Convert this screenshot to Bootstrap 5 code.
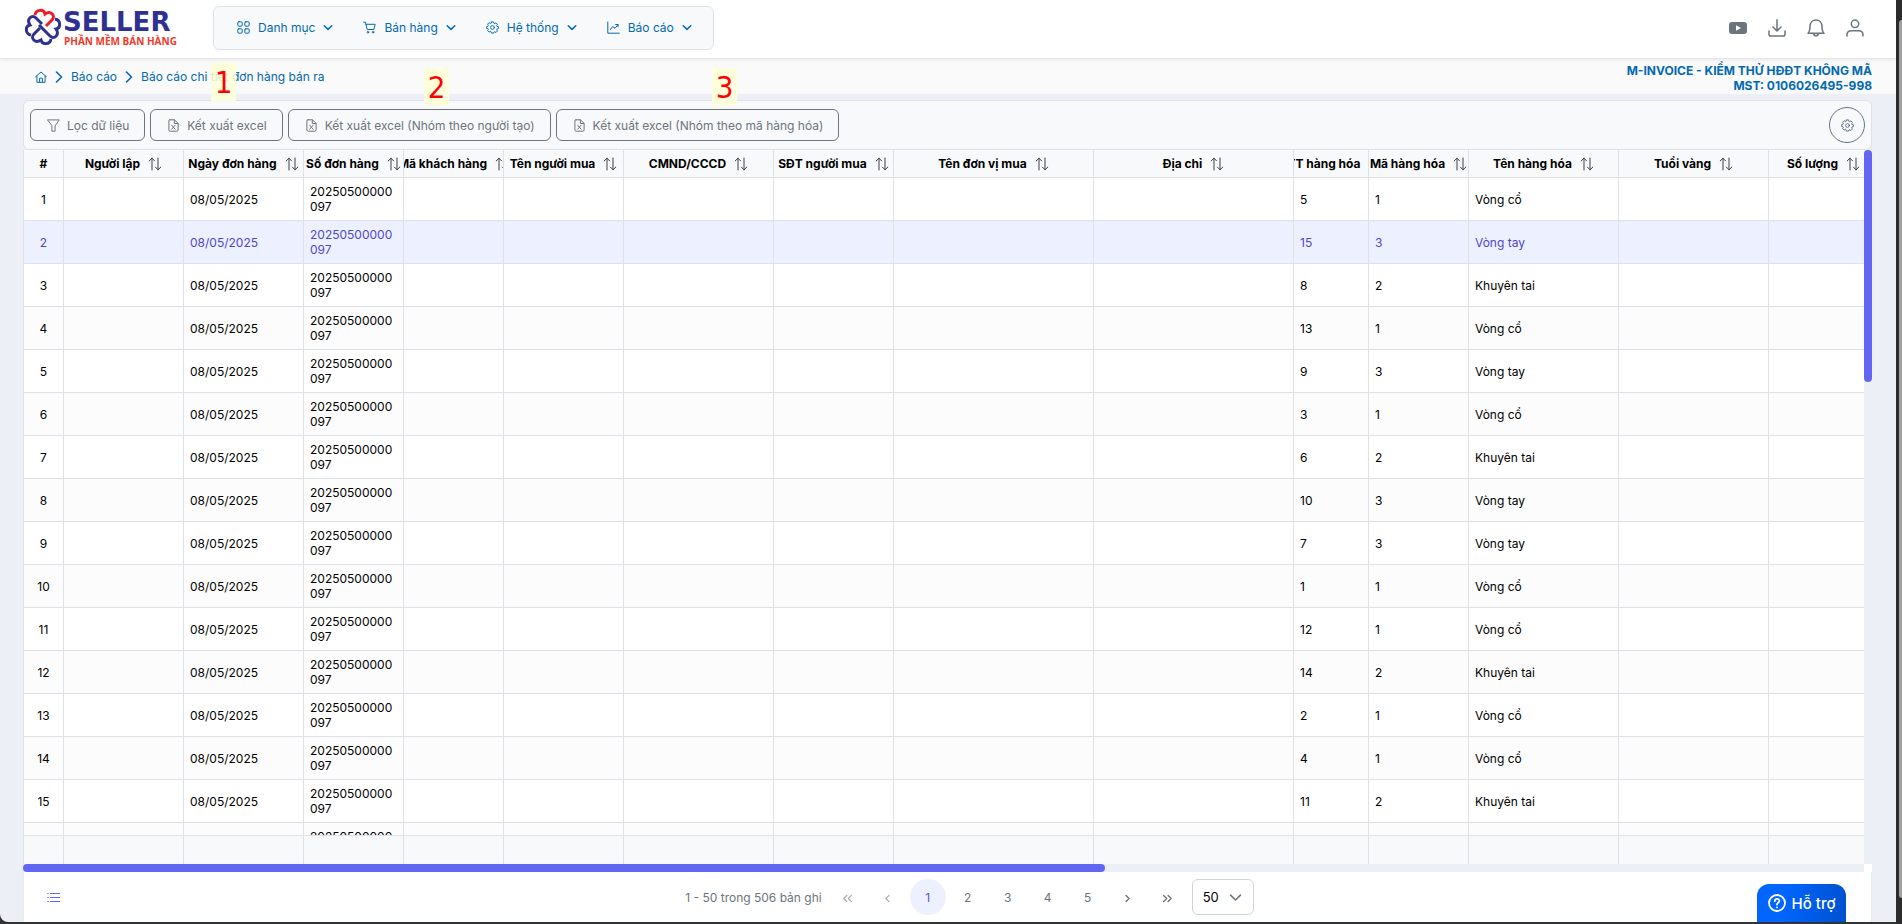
<!DOCTYPE html>
<html lang="vi">
<head>
<meta charset="utf-8">
<meta name="viewport" content="width=device-width, initial-scale=1">
<title>Báo cáo chi tiết đơn hàng bán ra</title>
<link href="https://cdn.jsdelivr.net/npm/bootstrap@5.3.0/dist/css/bootstrap.min.css" rel="stylesheet">
<style>
  :root { --brand: #0369b0; --line: #dee2e6; --soft: #f8f9fb; --shade: #eceff5; --accent: #6366f1; --ink: #6c757d; }
  body { font-family: Inter, "Liberation Sans", sans-serif; font-size: 12px; line-height: 15px; background: #323335; color: #000; }
  a { text-decoration: none; }
  .ico { width: 13px; height: 13px; flex: none; fill: none; stroke: currentColor; stroke-linecap: round; stroke-linejoin: round; }
  .app-page { background: var(--shade); border-bottom-left-radius: 8px; margin-bottom: 2px; min-width: 0; }
  .frame-bar { width: 6px; padding: 20px 0 26px 3px; background: #2c2c2c; }
  .frame-bar div { background: #9f9f9f; border-radius: 3px 0 0 3px; }
  .top-bar { height: 59px; background: #fff; border-bottom: 1px solid #e6e6e6; box-shadow: 0 1px 4px rgba(0,0,0,.08); padding-right: 32px; z-index: 1; }
  .brand-logo { margin-left: 23px; width: 190px; flex: none; }
  .main-menu { height: 44px; background: var(--soft); border: 1px solid var(--line); border-radius: 6px; padding: 0 6px 0 8px; margin-bottom: 3px; }
  .main-menu a { color: var(--brand); padding: 0 15px; }
  .main-menu .caret { width: 10px; }
  .quick { color: var(--ink); gap: 21px; margin-bottom: 2px; }
  .quick .ico { width: 18px; height: 18px; }
  .crumbs { height: 35px; background: #fafafa; padding: 0 24px 0 35px; }
  .crumbs, .crumbs a { color: var(--brand); }
  .crumbs .breadcrumb { gap: 8px; }
  .crumbs .ico { width: 12px; height: 12px; }
  .crumbs .sep { width: 8px; }
  .org { font-weight: 700; text-align: right; padding-top: 2px; }
  .work { padding: 6px 24px 0 23px; min-height: 0; }
  .tool-bar { height: 50px; background: var(--soft); border: 1px solid var(--line); border-radius: 6px; padding: 0 6px; gap: 5px; }
  .tool { height: 32px; padding: 0 15px 0 16px; border: 1px solid var(--ink); border-radius: 6px; background: transparent; color: var(--ink); gap: 7px; }
  .round-tool { width: 36px; height: 36px; border: 1px solid #64748b; border-radius: 50%; background: transparent; color: #5b6b80; }
  .grid-area { min-height: 0; }
  .grid-body { min-width: 0; border-left: 1px solid var(--line); background: #fff; }
  .clip { overflow: hidden; min-height: 0; }
  .orders { table-layout: fixed; width: 1855px; border-collapse: separate; border-spacing: 0; }
  .orders th, .orders td { border-right: 1px solid var(--line); border-bottom: 1px solid var(--line); overflow: hidden; }
  .orders th { height: 28px; background: var(--soft); padding: 0; font-weight: 700; }
  .orders th div { display: flex; justify-content: center; align-items: center; gap: 8px; white-space: nowrap; }
  .orders th .ico { width: 14px; height: 14px; color: #3b4148; }
  .orders td { height: 43px; padding: 6px; overflow-wrap: anywhere; }
  .orders tbody tr:nth-child(even) { background: #fcfcfc; }
  .orders tbody tr.picked { background: #edf1ff; color: #4f46d0; }
  .orders td:first-child { text-align: center; }
  .totals { border-top: 1px solid var(--line); flex: none; }
  .totals tfoot td { border-bottom: 0; height: 28px; padding: 0; background: var(--soft); }
  .v-track { width: 8px; }
  .v-track div { height: 32.5%; background: var(--accent); border-radius: 4px; }
  .h-track { height: 8px; background: linear-gradient(var(--shade), var(--shade)) 0 0 / calc(100% - 8px) 100% no-repeat #fff; }
  .h-track div { width: 58.5%; height: 100%; background: var(--accent); border-radius: 4px; }
  .pager-bar { height: 50px; background: #fff; border: solid #e9ecef; border-width: 0 1px; }
  .list-tool { width: 44px; padding: 0 0 0 23px; border: 0; background: transparent; color: var(--accent); }
  .pager { gap: 4px; margin: 0 6px 0 8px; }
  .pager button { width: 36px; height: 36px; border: 0; border-radius: 50%; background: transparent; color: var(--ink); padding: 0; }
  .pager button.now { background: #edf1ff; color: #5b50d0; }
  .pager button:disabled { opacity: .6; }
  .per-page { appearance: none; width: 62px; height: 36px; border: 1px solid #ced4da; border-radius: 6px; padding: 0 10px; background: #fff; color: #000; font-size: 13px; }
  .per-caret { right: 12px; top: 12px; color: var(--ink); pointer-events: none; }
  .help-tab { right: 50px; bottom: 0; width: 89px; height: 38px; border: 0; border-radius: 12px 12px 0 0; background: linear-gradient(100deg, #0066ff 30%, #0050cc); color: #fff; font-size: 15px; font-weight: 500; gap: 6px; z-index: 2; }
  .help-tab .ico { width: 18px; height: 18px; }
  .step { width: 25px; height: 38px; background: rgba(255,255,214,.85); color: #f00; font: 31px/38px "DejaVu Sans Condensed", "DejaVu Sans", sans-serif; text-align: center; z-index: 2; }
  .step-1 { left: 211px; top: 63px; }
  .step-2 { left: 424px; top: 68px; }
  .step-3 { left: 712px; top: 68px; }
</style>
</head>
<body>
<svg class="d-none">
  <symbol id="i-grid" viewBox="0 0 13 13"><rect x=".8" y=".8" width="4.4" height="4.4" rx="1"/><rect x="7.8" y=".8" width="4.4" height="4.4" rx="1"/><rect x=".8" y="7.8" width="4.4" height="4.4" rx="1"/><rect x="7.8" y="7.8" width="4.4" height="4.4" rx="1"/></symbol>
  <symbol id="i-cart" viewBox="0 0 13 13"><path d="M.6 1.2h1.8l1.8 7.3h6.6l1.4-5.2H3"/><circle cx="4.9" cy="11.2" r=".8"/><circle cx="10" cy="11.2" r=".8"/></symbol>
  <symbol id="i-gear" viewBox="0 0 14 14"><path d="M5.8 1h2.4l.3 1.5.9.4 1.3-.9 1.6 1.6-.9 1.3.4.9 1.5.3v2.2l-1.5.3-.4.9.9 1.3-1.6 1.6-1.3-.9-.9.4L8.200 13H5.800l-.3-1.500-.9-.4-1.300.9-1.600-1.600.9-1.300-.4-.9L.8 8.200V5.900l1.400-.3.4-.9-.9-1.300 1.600-1.600 1.300.9.900-.4z"/><circle cx="7" cy="7" r="2"/></symbol>
  <symbol id="i-chart" viewBox="0 0 13 13"><path d="M.8 1v11.200H12.300M3.400 8.500l2.300-3 2.300 1.800 3-3.700M8.600 3.500H11v2.400"/></symbol>
  <symbol id="i-down" viewBox="0 0 10 10"><path d="M1.200 3.200 5 6.900l3.800-3.700"/></symbol>
  <symbol id="i-sep" viewBox="0 0 8 12"><path d="m1.500 1 5 5-5 5"/></symbol>
  <symbol id="i-home" viewBox="0 0 12 12"><path d="M.6 5.700 6 1l5.400 4.700M1.900 5v6.300h8.200V5M4.600 11V7.200h2.800V11"/></symbol>
  <symbol id="i-filter" viewBox="0 0 13 13"><path d="M.8.900h11.400L8.100 6.900v5.300H4.900V6.900z"/></symbol>
  <symbol id="i-excel" viewBox="0 0 13 13"><path d="M2.900.8h4.500l3.700 3.500v6.600c0 .8-.5 1.300-1.300 1.300H3.200c-.8 0-1.300-.5-1.300-1.300V1.800c0-.6.400-1 1-1zM7.300 1v3.500H11M4.700 6.200l3.400 4M8.100 6.200l-3.400 4"/></symbol>
  <symbol id="i-sort" viewBox="0 0 14 14"><path d="M4 13V1.200M1.200 3.900 4 1.200l2.600 2.700M10 1v11.800M7.400 10.100l2.600 2.700 2.800-2.700"/></symbol>
  <symbol id="i-left" viewBox="0 0 13 13"><path d="M8 3.400 4.900 6.500 8 9.600"/></symbol>
  <symbol id="i-right" viewBox="0 0 13 13"><path d="m5 3.400 3.100 3.100L5 9.600"/></symbol>
  <symbol id="i-first" viewBox="0 0 13 13"><path d="M5.900 3.400 2.800 6.500l3.100 3.100M10.400 3.400 7.300 6.500l3.100 3.100"/></symbol>
  <symbol id="i-last" viewBox="0 0 13 13"><path d="m2.600 3.400 3.100 3.100-3.100 3.100M7.100 3.400l3.100 3.100-3.100 3.100"/></symbol>
</svg>

<div class="d-flex vh-100 overflow-hidden">
  <div class="app-page position-relative d-flex flex-column flex-fill overflow-hidden">
    <header class="top-bar d-flex align-items-center flex-shrink-0 position-relative">
      <a href="#" class="brand-logo" aria-label="Seller">
        <svg class="d-block" width="180" height="46" viewBox="0 0 180 46">
          <g fill="none" stroke="#2f3192" stroke-width="3" transform="translate(20 21)">
            <path d="M-8-12C-7-18 1-18 2-13 8-17 13-11 9-7L-2 4" transform="rotate(90)"/>
            <path d="M-8-12C-7-18 1-18 2-13 8-17 13-11 9-7L3-1" transform="rotate(180)"/>
            <path d="M-8-12C-7-18 1-18 2-13 8-17 13-11 9-7L3-1" transform="rotate(270)"/>
            <path stroke="#ee1c25" d="M-8-12C-7-18 1-18 2-13 8-17 13-11 9-7L3-1"/>
          </g>
          <text x="40" y="25" font-family="DejaVu Sans" font-size="26" font-weight="700" fill="#2f3192">SELLER</text>
          <text x="41" y="39" font-family="Open Sans" font-size="10" font-weight="700" fill="#f0392b">PHẦN MỀM BÁN HÀNG</text>
        </svg>
      </a>
      <nav class="main-menu d-flex align-items-center">
        <a href="#" class="d-flex align-items-center gap-2"><svg class="ico"><use href="#i-grid"/></svg>Danh mục<svg class="ico caret" stroke-width="1.500"><use href="#i-down"/></svg></a>
        <a href="#" class="d-flex align-items-center gap-2"><svg class="ico"><use href="#i-cart"/></svg>Bán hàng<svg class="ico caret" stroke-width="1.500"><use href="#i-down"/></svg></a>
        <a href="#" class="d-flex align-items-center gap-2"><svg class="ico"><use href="#i-gear"/></svg>Hệ thống<svg class="ico caret" stroke-width="1.500"><use href="#i-down"/></svg></a>
        <a href="#" class="d-flex align-items-center gap-2"><svg class="ico"><use href="#i-chart"/></svg>Báo cáo<svg class="ico caret" stroke-width="1.500"><use href="#i-down"/></svg></a>
      </nav>
      <div class="quick d-flex align-items-center ms-auto">
        <svg class="ico" viewBox="0 0 18 18"><path fill="currentColor" stroke="none" d="M3 3h12q3 0 3 3v6q0 3-3 3H3q-3 0-3-3V6q0-3 3-3z"/><path fill="#fff" stroke="none" d="m7 6.300 5 2.700-5 2.700z"/></svg>
        <svg class="ico" viewBox="0 0 18 18" stroke-width="1.500"><path d="M9 .8v11M5 8l4 4 4-4M1 12v3.200Q1 17 2.800 17h12.400q1.800 0 1.800-1.800V12"/></svg>
        <svg class="ico" viewBox="0 0 18 18" stroke-width="1.500"><path d="M1 14.200C3 12.500 3 10.500 3 7.500 3 3.500 5.500 1 9 1s6 2.500 6 6.500c0 3 0 5 2 6.700zM6.500 14.500q.5 2.300 2.500 2.300t2.500-2.300"/></svg>
        <svg class="ico" viewBox="0 0 18 18" stroke-width="1.500"><circle cx="9" cy="4.800" r="3.700"/><path d="M1 17v-1.200C1 13 3 11.700 5.500 11.700h7C15 11.700 17 13 17 15.800V17"/></svg>
      </div>
    </header>

    <div class="crumbs d-flex align-items-center justify-content-between flex-shrink-0">
      <nav aria-label="breadcrumb" class="breadcrumb d-flex align-items-center flex-nowrap m-0">
        <a href="#" class="d-flex" aria-label="Trang chủ"><svg class="ico"><use href="#i-home"/></svg></a>
        <svg class="ico sep" stroke-width="1.600"><use href="#i-sep"/></svg>
        <a href="#">Báo cáo</a>
        <svg class="ico sep" stroke-width="1.600"><use href="#i-sep"/></svg>
        <a href="#">Báo cáo chi tiết đơn hàng bán ra</a>
      </nav>
      <div class="org">M-INVOICE - KIỂM THỬ HĐĐT KHÔNG MÃ<br>MST: 0106026495-998</div>
    </div>

    <main class="work d-flex flex-column flex-fill">
      <div class="tool-bar d-flex align-items-center flex-shrink-0">
        <button class="tool d-flex align-items-center"><svg class="ico"><use href="#i-filter"/></svg>Lọc dữ liệu</button>
        <button class="tool d-flex align-items-center"><svg class="ico"><use href="#i-excel"/></svg>Kết xuất excel</button>
        <button class="tool d-flex align-items-center"><svg class="ico"><use href="#i-excel"/></svg>Kết xuất excel (Nhóm theo người tạo)</button>
        <button class="tool d-flex align-items-center"><svg class="ico"><use href="#i-excel"/></svg>Kết xuất excel (Nhóm theo mã hàng hóa)</button>
        <button class="round-tool d-flex align-items-center justify-content-center ms-auto p-0" aria-label="Cài đặt"><svg class="ico"><use href="#i-gear"/></svg></button>
      </div>

      <div class="grid-area d-flex flex-fill">
        <div class="grid-body d-flex flex-column flex-fill overflow-hidden">
          <div class="clip flex-fill">
            <table class="orders" id="orders">
              <thead><tr></tr></thead>
              <tbody></tbody>
            </table>
          </div>
          <table class="orders totals" id="totals"><tfoot><tr></tr></tfoot></table>
        </div>
        <div class="v-track"><div></div></div>
      </div>
      <div class="h-track flex-shrink-0"><div></div></div>

      <div class="pager-bar d-flex align-items-center flex-shrink-0">
        <button class="list-tool" aria-label="Danh sách"><svg class="ico d-block" viewBox="0 0 13 13" stroke-width="1.200"><path d="M.8 2.500h.4M3.500 2.500h9M.8 6.500h.4M3.500 6.500h9M.8 10.500h.4M3.500 10.500h9"/></svg></button>
        <div class="d-flex align-items-center justify-content-center flex-fill">
          <span class="text-secondary">1 - 50 trong 506 bản ghi</span>
          <nav class="pager d-flex" aria-label="Phân trang">
            <button disabled aria-label="Trang đầu"><svg class="ico" stroke-width="1.200"><use href="#i-first"/></svg></button>
            <button disabled aria-label="Trang trước"><svg class="ico" stroke-width="1.200"><use href="#i-left"/></svg></button>
            <button class="now">1</button>
            <button>2</button>
            <button>3</button>
            <button>4</button>
            <button>5</button>
            <button aria-label="Trang sau"><svg class="ico" stroke-width="1.400"><use href="#i-right"/></svg></button>
            <button aria-label="Trang cuối"><svg class="ico" stroke-width="1.400"><use href="#i-last"/></svg></button>
          </nav>
          <div class="position-relative">
            <select class="per-page" aria-label="Số bản ghi mỗi trang"><option>50</option><option>100</option></select>
            <svg class="ico per-caret position-absolute" stroke-width="1.200"><use href="#i-down"/></svg>
          </div>
        </div>
      </div>
    </main>

    <button class="help-tab position-absolute d-flex align-items-center justify-content-center p-0"><svg class="ico" viewBox="0 0 18 18" stroke-width="1.800"><circle cx="9" cy="9" r="8"/><path d="M6.700 7.200C6.700 4 11.500 4.200 11.300 7 11.200 8.600 9 8.700 9 10.500M9 13.300v.1"/></svg>Hỗ trợ</button>
    <div class="step step-1 position-absolute">1</div>
    <div class="step step-2 position-absolute">2</div>
    <div class="step step-3 position-absolute">3</div>
  </div>
  <div class="frame-bar d-flex flex-shrink-0"><div class="flex-fill"></div></div>
</div>

<script>
  // Column titles with their widths
  const columns = [['#', 40], ['Người lập', 120], ['Ngày đơn hàng', 120], ['Số đơn hàng', 100], ['Mã khách hàng', 100],
    ['Tên người mua', 120], ['CMND/CCCD', 150], ['SĐT người mua', 120], ['Tên đơn vị mua', 200], ['Địa chỉ', 200],
    ['STT hàng hóa', 75], ['Mã hàng hóa', 100], ['Tên hàng hóa', 150], ['Tuổi vàng', 150], ['Số lượng', 110]];
  // Item number in the order and product code of each line
  const lines = [[5, 1], [15, 3], [8, 2], [13, 1], [9, 3], [3, 1], [6, 2], [10, 3], [7, 3], [1, 1], [12, 1], [14, 2], [2, 1], [4, 1], [11, 2], [16, 1]];
  const products = { 1: 'Vòng cổ', 2: 'Khuyên tai', 3: 'Vòng tay' };
  const sort = '<svg class="ico"><use href="#i-sort"/></svg>';

  const widths = '<colgroup>' + columns.map(c => `<col style="width:${c[1]}px">`).join('') + '</colgroup>';
  document.querySelectorAll('.orders').forEach(t => t.insertAdjacentHTML('afterbegin', widths));
  document.querySelector('#orders thead tr').innerHTML =
    columns.map((c, i) => `<th scope="col"><div>${c[0]}${i ? sort : ''}</div></th>`).join('');
  document.querySelector('#orders tbody').innerHTML = lines.map(([item, code], i) => {
    const cells = [i + 1, '', '08/05/2025', '20250500000097', '', '', '', '', '', '', item, code, products[code], '', ''];
    return `<tr class="${i === 1 ? 'picked' : ''}">` + cells.map(c => `<td>${c}</td>`).join('') + '</tr>';
  }).join('');
  document.querySelector('#totals tr').innerHTML = columns.map(() => '<td></td>').join('');
</script>
<script src="https://cdn.jsdelivr.net/npm/bootstrap@5.3.0/dist/js/bootstrap.bundle.min.js"></script>
</body>
</html>
